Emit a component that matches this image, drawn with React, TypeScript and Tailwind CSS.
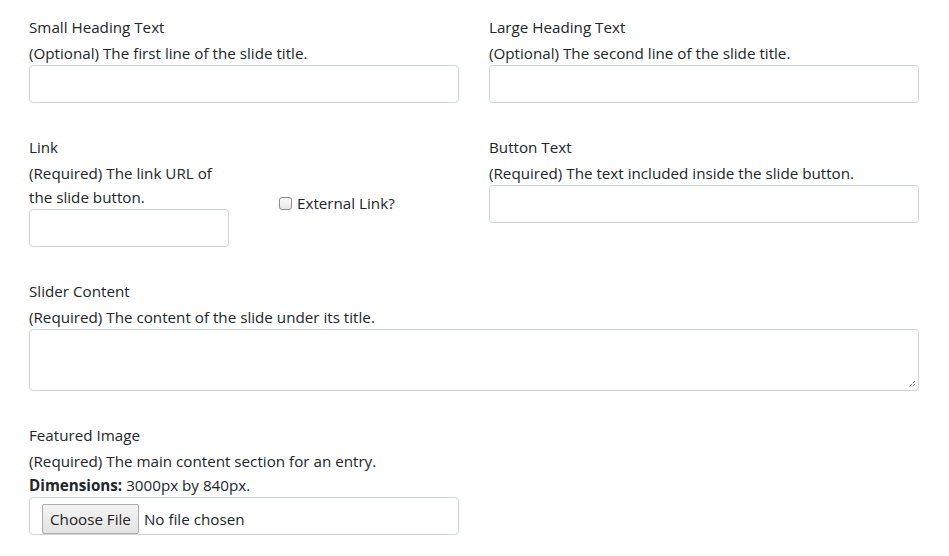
import React from "react";

const font = { fontFamily: '"Open Sans", "Noto Sans", sans-serif' };

function Field({ label, desc, children }: { label: string; desc: React.ReactNode; children: React.ReactNode }) {
  return (
    <div className="flex flex-col">
      <div className="h-[24px] leading-[24px] mb-[2px]">{label}</div>
      <div className="leading-[24px]">{desc}</div>
      {children}
    </div>
  );
}

const inputCls = "h-[38px] w-full rounded-[4px] border border-[#ced4da] bg-white";

export default function App() {
  return (
    <div className="bg-white w-[949px] h-[556px] overflow-hidden text-[15.2px] text-[#212529] pl-[29px] pr-[30px] pt-[15px]" style={font}>
      <div className="grid grid-cols-2 gap-x-[30px]">
        <Field label="Small Heading Text" desc="(Optional) The first line of the slide title.">
          <div className={inputCls} />
        </Field>
        <Field label="Large Heading Text" desc="(Optional) The second line of the slide title.">
          <div className={inputCls} />
        </Field>
      </div>
      <div className="grid grid-cols-2 gap-x-[30px] mt-[32px]">
        <div className="flex">
          <div className="w-[200px]">
            <Field label="Link" desc={<>(Required) The link URL of<br />the slide button.</>}>
              <div className={inputCls} />
            </Field>
          </div>
          <div className="ml-[50px] pt-[56px]">
            <div className="flex items-center h-[24px]">
              <span className="w-[13px] h-[13px] rounded-[3px] border border-[#8f8f8f] bg-gradient-to-b from-[#fdfdfd] to-[#e6e6e6] mr-[5px]" />
              <span>External Link?</span>
            </div>
          </div>
        </div>
        <Field label="Button Text" desc="(Required) The text included inside the slide button.">
          <div className={inputCls} />
        </Field>
      </div>
      <div className="mt-[32px]">
        <Field label="Slider Content" desc="(Required) The content of the slide under its title.">
          <div className="relative h-[62px] w-full rounded-[4px] border border-[#ced4da] bg-white">
            <svg className="absolute right-[2px] bottom-[2px]" width="9" height="9" viewBox="0 0 9 9">
              <path d="M8 2 L2 8 M8 5 L5 8" stroke="#555" strokeWidth="1" strokeDasharray="1 1" />
            </svg>
          </div>
        </Field>
      </div>
      <div className="mt-[32px] w-[430px]">
        <Field label="Featured Image" desc={<>(Required) The main content section for an entry.<br /><b>Dimensions:</b> 3000px by 840px.</>}>
          <div className="h-[38px] w-full rounded-[4px] border border-[#ced4da] bg-white flex items-start pt-[6px] pl-[12px]">
            <div className="h-[30px] px-[7px] flex items-center bg-gradient-to-b from-[#f4f4f4] to-[#e3e3e3] border border-[#adadad] rounded-[2px] text-[#222]">Choose File</div>
            <span className="ml-[5px] h-[30px] flex items-center">No file chosen</span>
          </div>
        </Field>
      </div>
    </div>
  );
}
